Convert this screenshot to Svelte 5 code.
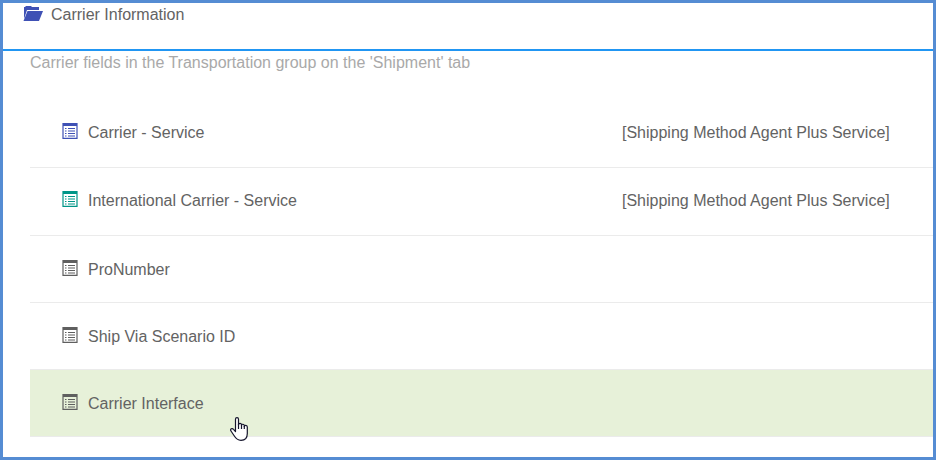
<script>
  const fields = [
    { label: 'Carrier - Service', value: '[Shipping Method Agent Plus Service]', tone: 'indigo' },
    { label: 'International Carrier - Service', value: '[Shipping Method Agent Plus Service]', tone: 'teal' },
    { label: 'ProNumber', value: '', tone: 'gray' },
    { label: 'Ship Via Scenario ID', value: '', tone: 'gray' },
    { label: 'Carrier Interface', value: '', tone: 'gray', active: true }
  ];
</script>

<main class="panel">
  <header class="head">
    <svg class="folder" width="20" height="15" viewBox="0 0 20 15" aria-hidden="true">
      <path d="M1 1H2L3 0H8L9 1H16V4H4L1 13Z" />
      <path d="M4.5 5H20L16 15H0.5Z" />
    </svg>
    <h1>Carrier Information</h1>
  </header>

  <section class="body">
    <p class="note">Carrier fields in the Transportation group on the 'Shipment' tab</p>
    <ul class="rows">
      {#each fields as field}
        <li class="row" class:filled={field.value} class:active={field.active}>
          <svg class="icon {field.tone}" width="16" height="16" viewBox="0 0 16 16" aria-hidden="true">
            <path fill-rule="evenodd" d="M0.4 0H15.6V16H0.4ZM1.6 3V14.8H14.4V3Z" />
            <path d="M3 5h1.5v1H3zM6 5h7v1H6zM3 7.4h1.5v1H3zM6 7.4h7v1H6zM3 10h1.5v1H3zM6 10h7v1H6zM3 12.4h1.5v1H3zM6 12.4h7v1H6z" />
          </svg>
          <span class="label">{field.label}</span>
          {#if field.value}<span class="value">{field.value}</span>{/if}
          {#if field.active}
            <svg class="pointer" width="18" height="24" viewBox="0 0 18 24" aria-hidden="true">
              <path d="M5.5 14.5V2.2C5.5 .2 8.5 .2 8.5 2.2V8C8.5 5.8 11.5 5.8 11.5 7.8V8.5C11.5 6.7 14.3 6.9 14.3 8.7V9.5C14.3 8 17.3 8 17.3 10V16.5C17.3 20.5 15 23.3 11 23.3C7 23.3 5.5 21 4 18.5L1 14C-.3 12 2.2 10.8 3.5 12.3L5.5 14.5Z" />
              <path d="M8.5 7V12M11.5 8V12M14.3 9V12" />
            </svg>
          {/if}
        </li>
      {/each}
    </ul>
  </section>
</main>

<style>
  :global(body) {
    margin: 0;
  }
  .panel {
    box-sizing: border-box;
    min-height: 100vh;
    border: 3px solid #558cd3;
    background: #fff;
    color: #636363;
    font: 16px/20px "Liberation Sans", Arial, sans-serif;
  }
  .head {
    display: flex;
    align-items: center;
    gap: 8px;
    padding: 2px 20px 24px;
    border-bottom: 2px solid #2196f3;
  }
  h1 {
    margin: 0;
    font-size: 16px;
    font-weight: 400;
  }
  .folder {
    margin-bottom: 3px;
    fill: #3f51b5;
  }
  .body {
    padding: 2px 0 20px 27px;
  }
  .note {
    margin: 0 0 27px;
    color: #a9a9a9;
  }
  .rows {
    margin: 0;
    padding: 0;
    list-style: none;
  }
  .row {
    position: relative;
    display: flex;
    align-items: center;
    box-sizing: border-box;
    min-height: 67px;
    padding: 1px 39px 0 32px;
    border-bottom: 1px solid #ebebeb;
  }
  .row.filled {
    min-height: 68px;
    padding-top: 0;
    padding-bottom: 2px;
  }
  .row.active {
    background: #e7f1d9;
    cursor: pointer;
  }
  .icon {
    margin: 0 10px 3px 0;
    fill: currentColor;
  }
  .indigo {
    color: #3f51b5;
  }
  .teal {
    color: #009688;
  }
  .gray {
    color: #5f5f5f;
  }
  .value {
    flex: 0 0 272px;
    margin-left: auto;
  }
  .pointer {
    position: absolute;
    top: 47px;
    left: 200px;
    fill: #fff;
    stroke: #14142b;
    stroke-width: 1.2;
    stroke-linejoin: round;
  }
</style>
